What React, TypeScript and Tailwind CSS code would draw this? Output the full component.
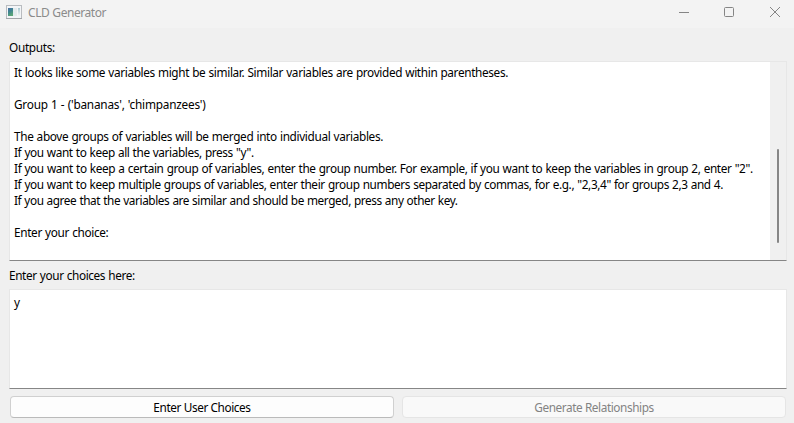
import React from "react";

const lines: { text: string; spacing: string }[] = [
  { text: "It looks like some variables might be similar. Similar variables are provided within parentheses.", spacing: "tracking-[-0.35px]" },
  { text: "", spacing: "" },
  { text: "Group 1 - ('bananas', 'chimpanzees')", spacing: "tracking-[-0.22px]" },
  { text: "", spacing: "" },
  { text: "The above groups of variables will be merged into individual variables.", spacing: "tracking-[-0.34px]" },
  { text: 'If you want to keep all the variables, press "y".', spacing: "tracking-[-0.38px]" },
  { text: 'If you want to keep a certain group of variables, enter the group number. For example, if you want to keep the variables in group 2, enter "2".', spacing: "tracking-[-0.362px]" },
  { text: 'If you want to keep multiple groups of variables, enter their group numbers separated by commas, for e.g., "2,3,4" for groups 2,3 and 4.', spacing: "tracking-[-0.375px]" },
  { text: "If you agree that the variables are similar and should be merged, press any other key.", spacing: "tracking-[-0.41px]" },
  { text: "", spacing: "" },
  { text: "Enter your choice:", spacing: "tracking-[-0.34px]" },
];

function AppIcon() {
  return (
    <svg width="16" height="14" viewBox="0 0 16 14" shapeRendering="crispEdges">
      <defs>
        <linearGradient id="pane" x1="0" y1="0" x2="0.4" y2="1">
          <stop offset="0" stopColor="#4b6fa5" />
          <stop offset="0.5" stopColor="#3f8590" />
          <stop offset="1" stopColor="#5aa578" />
        </linearGradient>
        <linearGradient id="side" x1="0" y1="0" x2="0" y2="1">
          <stop offset="0" stopColor="#a9c8d0" />
          <stop offset="1" stopColor="#f4f6f6" />
        </linearGradient>
      </defs>
      <rect x="0" y="0" width="16" height="14" fill="#b9bcc0" />
      <rect x="1" y="1" width="14" height="12" fill="#f3f5f7" />
      <rect x="2" y="3" width="5" height="8" fill="url(#pane)" />
      <rect x="7" y="3" width="4" height="8" fill="#e3ebed" />
      <rect x="12" y="3" width="2" height="8" fill="url(#side)" />
      <rect x="0" y="13" width="16" height="1" fill="#a2a5a9" />
    </svg>
  );
}

function TitleBar() {
  return (
    <header className="flex h-[28px] shrink-0 items-start bg-[#f3f3f3] pl-[6px]">
      <div className="pt-[5px]">
        <AppIcon />
      </div>
      <h1 className="ml-[6px] pt-[5px] text-[12px] leading-[16px] tracking-[-0.45px] text-[#8b8b8b]">CLD Generator</h1>
      <div className="ml-auto flex pt-[6px] pr-[12px]">
        <svg width="103" height="12" viewBox="0 0 103 12" fill="none" stroke="#858585">
          <path d="M0 6.5h10" />
          <rect x="45.5" y="1.5" width="9" height="9" rx="1" />
          <path d="M91 1l10 10M101 1l-10 10" />
        </svg>
      </div>
    </header>
  );
}

export default function App() {
  return (
    <div className="flex h-[423px] w-[794px] flex-col overflow-hidden bg-[#f0f0f0] font-['Noto_Sans','Open_Sans',sans-serif] text-[11.8px] leading-[16px] text-black [word-spacing:0.4px]">
      <TitleBar />
      <main className="flex flex-col pl-[9px] pr-[7px] pt-[11px]">
        <div className="h-[22px] tracking-[-0.3px]">
          <span>Outputs:</span>
        </div>
        <section className="flex h-[200px] border border-[#e7e7e7] border-b-[#868686] bg-white">
          <div className="min-w-0 flex-1 pl-[4px] pt-[2px]">
            {lines.map((line, i) => (
              <div key={i} className="h-[16px] whitespace-pre">
                <span className={line.spacing}>{line.text}</span>
              </div>
            ))}
          </div>
          <div className="w-[16px] bg-[#f0f0f0] pl-[7px] pt-[87px]">
            <div className="h-[94px] w-[2px] rounded-full bg-[#868686]" />
          </div>
        </section>
        <div className="h-[28px] pt-[6px] tracking-[-0.38px]">
          <span>Enter your choices here:</span>
        </div>
        <section className="h-[100px] border border-[#e7e7e7] border-b-[#868686] bg-white pl-[4px] pt-[4px]">y</section>
        <div className="flex gap-[8px] pl-px pt-[7px] pr-px">
          <button className="h-[22px] w-[384px] rounded-[4px] border border-[#d0d0d0] border-b-[#bababa] bg-[#fdfdfd] leading-[20px] tracking-[-0.4px]">
            <span>Enter User Choices</span>
          </button>
          <button disabled className="h-[22px] w-[384px] rounded-[4px] border border-[#e5e5e5] bg-[#f9f9f9] leading-[20px] tracking-[-0.42px] text-[#838383]">
            <span>Generate Relationships</span>
          </button>
        </div>
      </main>
    </div>
  );
}
